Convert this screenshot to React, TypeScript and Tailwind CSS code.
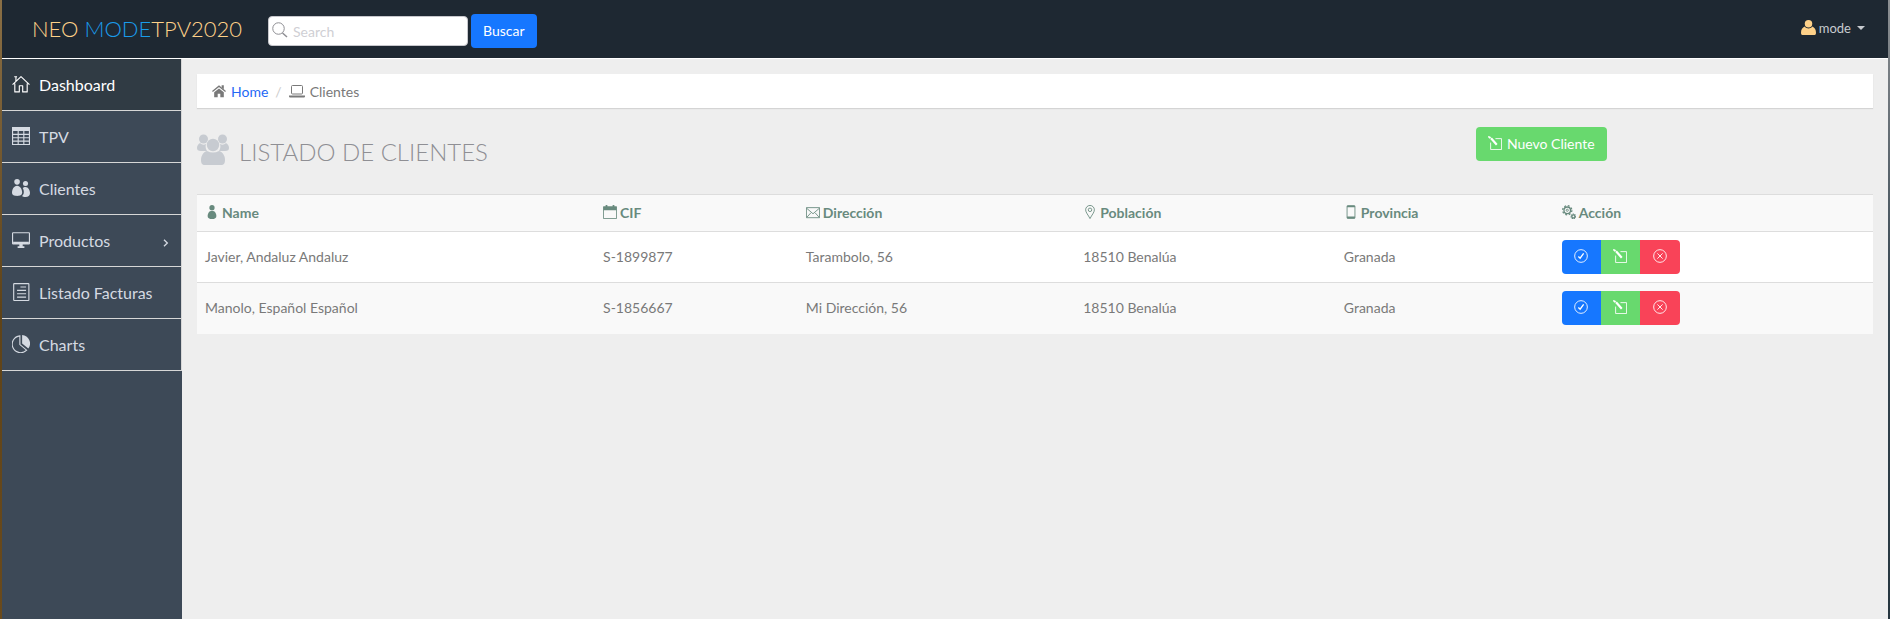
import React, { ReactNode } from "react";

type IconProps = { className?: string; children?: ReactNode };

function Svg({ className = "", children }: IconProps) {
  return (
    <svg
      viewBox="0 0 32 32"
      fill="none"
      stroke="currentColor"
      strokeWidth="2"
      aria-hidden="true"
      className={`shrink-0 ${className}`}
    >
      {children}
    </svg>
  );
}

const HouseIcon = (p: IconProps) => (
  <Svg {...p}>
    <path d="M1 17 16 3l15 14M5 15v15h8V19h6v11h8V15M7 11V3M4 3h5" strokeLinejoin="round" />
  </Svg>
);

const TableIcon = (p: IconProps) => (
  <Svg {...p}>
    <path d="M1 1h30v30H1zM1 13h30M1 19h30M1 25h30M11 5v26M21 5v26" />
    <path d="M1 1h30v5H1z" fill="currentColor" />
  </Svg>
);

const GroupIcon = (p: IconProps) => (
  <Svg {...p}>
    <g fill="currentColor" stroke="none">
      <circle cx="9" cy="5" r="5" />
      <circle cx="24" cy="8" r="4.500" />
      <path d="M9 12c6 0 9 7 9 12 0 5-4 6-9 6s-9-1-9-6c0-5 3-12 9-12z" />
      <path d="M24 14c5 0 8 6 8 11 0 5-3 7-8 7-3 0-5-1-6-2 2-2 3-4 3-7 0-3-1-5-2-7 1-1 3-2 5-2z" />
    </g>
  </Svg>
);

const DesktopIcon = (p: IconProps) => (
  <Svg {...p}>
    <rect x="1" y="3" width="30" height="20" rx="1" />
    <path d="M2 19h28v4H2zM13 23h6v4h3v3H10v-3h3z" fill="currentColor" stroke="none" />
  </Svg>
);

const DocumentIcon = (p: IconProps) => (
  <Svg {...p}>
    <rect x="3" y="1" width="27" height="30" rx="1" />
    <path d="M15 7h10M9 13h16M9 19h16M9 25h16" />
  </Svg>
);

const PieIcon = (p: IconProps) => (
  <Svg {...p}>
    <path d="M14 1.500A15 15 0 1 0 26 27L14 17z" />
    <path d="M18 0a15 15 0 0 1 11 24L18 15z" fill="currentColor" stroke="none" />
  </Svg>
);

const SearchIcon = (p: IconProps) => (
  <Svg {...p}>
    <circle cx="13" cy="13" r="11.500" />
    <path d="m21 22 9 8" strokeWidth="3" />
  </Svg>
);

const ProfileIcon = (p: IconProps) => (
  <Svg {...p}>
    <g fill="currentColor" stroke="none">
      <circle cx="16" cy="8" r="8" />
      <path d="M8 14c2 3 5 4 8 4s6-1 8-4c5 2 8 7 8 13 0 4-2 5-5 5H5c-3 0-5-1-5-5 0-6 3-11 8-13z" />
    </g>
  </Svg>
);

const SolidHomeIcon = (p: IconProps) => (
  <Svg {...p}>
    <path d="M1 17 16 5l15 12" strokeWidth="3" />
    <path d="M16 10 27 19v11h-8v-8h-6v8H5V19zM22 3h5v9l-5-4z" fill="currentColor" stroke="none" />
  </Svg>
);

const LaptopIcon = (p: IconProps) => (
  <Svg {...p}>
    <rect x="5" y="5" width="22" height="17" rx="2" />
    <path d="M0 25h32v2c0 1-1 2-3 2H3c-2 0-3-1-3-2z" fill="currentColor" stroke="none" />
  </Svg>
);

const UsersIcon = (p: IconProps) => (
  <Svg {...p}>
    <g fill="currentColor" stroke="none">
      <circle cx="6.500" cy="5" r="4.500" />
      <circle cx="25.500" cy="5" r="4.500" />
      <circle cx="16" cy="11" r="6.200" />
      <path d="M3 9c2 2 4 2 6 1-1 3 0 5 1 7H4c-3 0-4-1-4-3 0-2 1-4 3-5zM29 9c-2 2-4 2-6 1 1 3 0 5-1 7h6c3 0 4-1 4-3 0-2-1-4-3-5z" />
      <path d="M10 17c4 2 8 2 12 0 4 1 6 5 6 9 0 3-1 5-4 5H8c-3 0-4-2-4-5 0-4 2-8 6-9z" />
    </g>
  </Svg>
);

const PersonIcon = (p: IconProps) => (
  <Svg {...p}>
    <g fill="currentColor" stroke="none">
      <circle cx="16" cy="6" r="6" />
      <path d="M16 13c7 0 10 7 10 12 0 5-4 7-10 7S6 30 6 25c0-5 3-12 10-12z" />
    </g>
  </Svg>
);

const CalendarIcon = (p: IconProps) => (
  <Svg {...p}>
    <path d="M1 4h30v27H1z" />
    <path d="M1 4h30v8H1z" fill="currentColor" stroke="none" />
    <path d="M8 0v6M24 0v6" strokeWidth="4" />
  </Svg>
);

const MailIcon = (p: IconProps) => (
  <Svg {...p}>
    <path d="M1 6h30v23H1zM1 7l15 13L31 7M2 28l9-10M30 28l-9-10" />
  </Svg>
);

const PinIcon = (p: IconProps) => (
  <Svg {...p}>
    <path d="M16 31C12 23 6 17 6 11a10 10 0 0 1 20 0c0 6-6 12-10 20z" />
    <circle cx="16" cy="11" r="4" />
  </Svg>
);

const MobileIcon = (p: IconProps) => (
  <Svg {...p}>
    <rect x="7" y="1" width="18" height="30" rx="2" />
    <path d="M7 2h18v3H7zM7 26h18v4H7z" fill="currentColor" stroke="none" />
  </Svg>
);

const GearsIcon = (p: IconProps) => (
  <Svg {...p}>
    <circle cx="12" cy="12" r="10.500" strokeWidth="3" strokeDasharray="4.250 4" />
    <circle cx="12" cy="12" r="7.500" strokeWidth="3" />
    <circle cx="12" cy="12" r="2.500" />
    <circle cx="26" cy="26" r="5" strokeWidth="3" strokeDasharray="2.500 1.430" />
    <circle cx="26" cy="26" r="3.500" strokeWidth="3" />
  </Svg>
);

const EditIcon = (p: IconProps) => (
  <Svg {...p}>
    <path d="M17 6h14v25H6V15" />
    <path d="m7 5 13 15" strokeWidth="5" />
    <path d="m0 0 5 1 2 3-3 2-3-2z" fill="currentColor" stroke="none" />
  </Svg>
);

const CheckIcon = (p: IconProps) => (
  <Svg {...p}>
    <circle cx="16" cy="16" r="14.500" />
    <path d="m10 17 4 4 8-11" strokeWidth="3" />
  </Svg>
);

const CloseIcon = (p: IconProps) => (
  <Svg {...p}>
    <circle cx="16" cy="16" r="14.500" />
    <path d="m10 10 12 12M22 10 10 22" />
  </Svg>
);

const menu = [
  { label: "Dashboard", Icon: HouseIcon, active: true },
  { label: "TPV", Icon: TableIcon },
  { label: "Clientes", Icon: GroupIcon },
  { label: "Productos", Icon: DesktopIcon, submenu: true },
  { label: "Listado Facturas", Icon: DocumentIcon },
  { label: "Charts", Icon: PieIcon },
];

const columns = [
  { label: "Name", Icon: PersonIcon, width: "w-[23.75%]" },
  { label: "CIF", Icon: CalendarIcon, width: "w-[12.1%]" },
  { label: "Dirección", Icon: MailIcon, width: "w-[16.55%]" },
  { label: "Población", Icon: PinIcon, width: "w-[15.55%]" },
  { label: "Provincia", Icon: MobileIcon, width: "w-[13%]" },
  { label: "Acción", Icon: GearsIcon, width: "" },
];

const clients = [
  ["Javier, Andaluz Andaluz", "S-1899877", "Tarambolo, 56", "18510 Benalúa", "Granada"],
  ["Manolo, Español Español", "S-1856667", "Mi Dirección, 56", "18510 Benalúa", "Granada"],
];

function Header() {
  return (
    <header className="flex h-[59px] items-center border-b border-white bg-[#1e2832] pr-[23px] pl-[30px]">
      <a href="#" className="w-[236px] text-[22px] leading-6 font-light text-[#fed189]">
        NEO <span className="text-[#1a9bea]">MODE</span>TPV2020
      </a>
      <form className="flex items-center gap-[3px] pt-1" onSubmit={(e) => e.preventDefault()}>
        <div className="relative">
          <SearchIcon className="absolute top-[6px] left-1 size-4 text-[#8e8e93]" />
          <input
            type="search"
            aria-label="Search"
            placeholder="Search"
            className="h-[30px] w-[200px] rounded border border-[#c7c7cc] bg-white pr-2 pl-6 text-sm text-[#8e8e93] placeholder:text-[#cfcfd4]"
          />
        </div>
        <button className="h-[34px] rounded bg-[#1677ff] px-3 text-sm text-white">Buscar</button>
      </form>
      <button className="mb-[2px] ml-auto flex items-center gap-[3px] text-[13px] leading-5 text-[#c8cbd0]">
        <ProfileIcon className="mb-[2px] size-[15px] text-[#fed189]" />
        mode
        <svg viewBox="0 0 8 4" className="ml-[3px] h-1 w-2" fill="currentColor" aria-hidden="true">
          <path d="M0 0h8L4 4z" />
        </svg>
      </button>
    </header>
  );
}

function Sidebar() {
  return (
    <aside className="w-[180px] shrink-0 bg-[#3d4957]">
      <nav className="border-r border-[#d7d7d7]">
        {menu.map(({ label, Icon, active, submenu }) => (
          <a
            key={label}
            href="#"
            className={`flex h-[52px] items-center border-b border-[#d7d7d7] pl-[10px] text-base ${
              active ? "bg-[#303b44] text-white" : "text-[#d5dae2]"
            }`}
          >
            <Icon className="mr-[9px] mb-[2px] size-[18px]" />
            {label}
            {submenu && (
              <svg
                viewBox="0 0 8 12"
                className="mt-1 mr-3 ml-auto h-2 w-[6px]"
                fill="none"
                stroke="currentColor"
                strokeWidth="2"
                aria-hidden="true"
              >
                <path d="m1 1 5 5-5 5" />
              </svg>
            )}
          </a>
        ))}
      </nav>
    </aside>
  );
}

function ClientTable() {
  return (
    <table className="mt-[18px] w-full table-fixed border-collapse text-left text-sm text-[#797979]">
      <thead>
        <tr className="h-[37px] border-t border-[#dddddd] bg-[#f9f9f9] text-[#688a7e]">
          {columns.map(({ label, Icon, width }) => (
            <th key={label} className={`px-2 font-bold ${width}`}>
              <span className="flex items-center gap-[3px]">
                <Icon className="mb-[2px] size-[14px]" />
                {label}
              </span>
            </th>
          ))}
        </tr>
      </thead>
      <tbody>
        {clients.map((cells) => (
          <tr key={cells[0]} className="h-[51px] border-t border-[#dddddd] odd:bg-white even:bg-[#f9f9f9]">
            {cells.map((cell, i) => (
              <td key={i} className="px-2">
                {cell}
              </td>
            ))}
            <td className="px-2">
              <div className="flex w-max overflow-hidden rounded text-white">
                <button aria-label="Ver" className="flex h-[34px] w-[39px] items-center justify-center bg-[#1677ff]">
                  <CheckIcon className="mb-[2px] size-[14px]" />
                </button>
                <button aria-label="Editar" className="flex h-[34px] w-[39px] items-center justify-center bg-[#68d96e]">
                  <EditIcon className="mb-[2px] size-[14px]" />
                </button>
                <button aria-label="Eliminar" className="flex h-[34px] w-10 items-center justify-center bg-[#f94358]">
                  <CloseIcon className="mb-[2px] size-[14px]" />
                </button>
              </div>
            </td>
          </tr>
        ))}
      </tbody>
    </table>
  );
}

export default function App() {
  return (
    <div className="flex min-h-screen bg-[#eeeeee] font-['Lato',sans-serif]">
      <div className="w-[2px] shrink-0 bg-linear-to-b from-[#8a6f45] via-[#5f4318] to-[#6a4a1c]" />
      <div className="flex min-w-0 flex-1 flex-col">
        <Header />
        <div className="flex flex-1">
          <Sidebar />
          <main className="min-w-0 flex-1 px-[15px] pt-[15px]">
            <nav
              aria-label="Breadcrumb"
              className="flex h-[34px] items-center bg-white px-[15px] pt-[2px] text-sm text-[#797979] shadow-[0_1px_1px_#d4d4d4]"
            >
              <SolidHomeIcon className="mr-[5px] mb-[2px] size-[14px]" />
              <a href="#" className="text-[#2468f5]">
                Home
              </a>
              <span className="mx-[7px] text-[#cccccc]">/</span>
              <LaptopIcon className="mr-[5px] mb-[2px] size-4" />
              Clientes
            </nav>
            <div className="mt-[19px] flex items-start justify-between pr-[15.9%]">
              <h1 className="flex items-center text-2xl leading-[49px] font-light text-[#8f8f94]">
                <UsersIcon className="mr-[10px] mb-1 size-8 text-[#c7cbd1]" />
                LISTADO DE CLIENTES
              </h1>
              <button className="flex h-[34px] items-center rounded bg-[#68d96e] px-3 text-sm text-white">
                <EditIcon className="mr-[5px] mb-[2px] size-[14px]" />
                Nuevo Cliente
              </button>
            </div>
            <ClientTable />
          </main>
        </div>
      </div>
      <div className="w-[2px] shrink-0 bg-linear-to-b from-[#8d9093] via-[#34444f] to-[#26363f]" />
    </div>
  );
}
